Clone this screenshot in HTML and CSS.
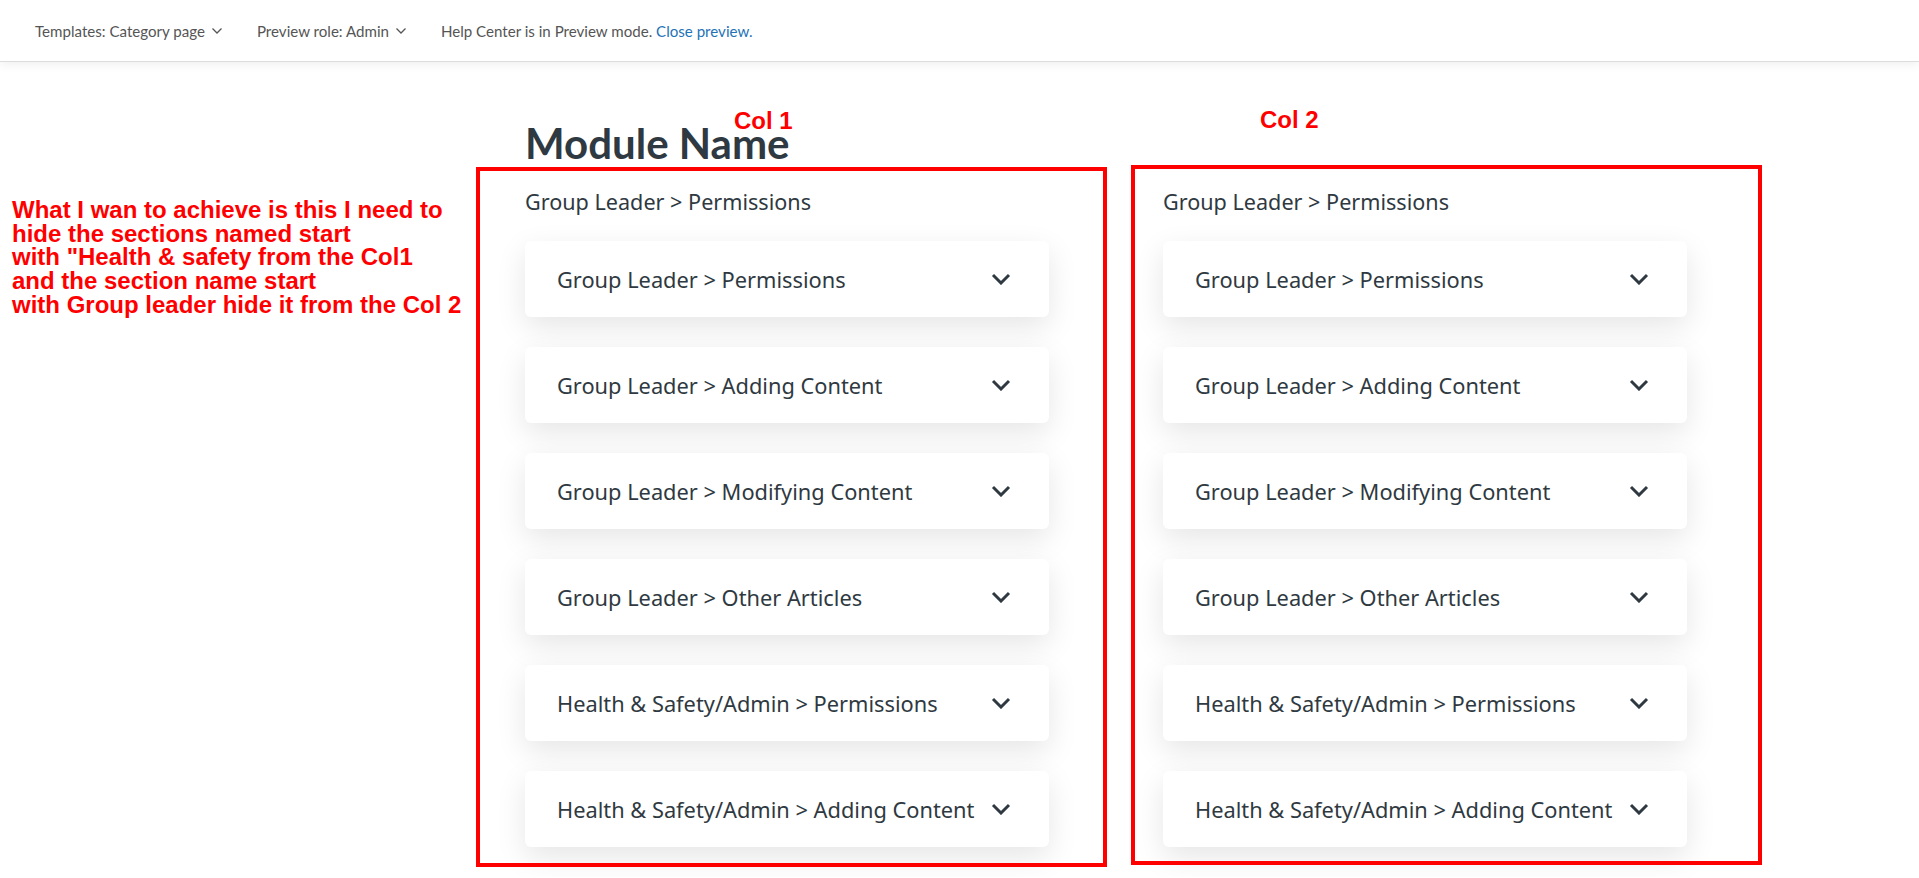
FILE: index.html
```html
<!DOCTYPE html>
<html>
<head>
    <title>Module Name</title>
    <link rel="stylesheet" href="styles.css">
</head>
<body>
    <header class="preview-bar">
        <span class="preview-item">Templates: Category page <svg class="caret" viewBox="0 0 12 12"><path d="M1.5 3.5l4.5 4.5 4.5-4.5"/></svg></span>
        <span class="preview-item">Preview role: Admin <svg class="caret" viewBox="0 0 12 12"><path d="M1.5 3.5l4.5 4.5 4.5-4.5"/></svg></span>
        <span class="preview-item">Help Center is in Preview mode.&nbsp;<a href="#">Close preview.</a></span>
    </header>

    <div class="page">
        <p class="note">What I wan to achieve is this I need to<br>
            hide the sections named start<br>
            with "Health &amp; safety from the Col1<br>
            and the section name start<br>
            with Group leader hide it from the Col 2</p>

        <main class="module">
            <h1>Module Name</h1>

            <div class="columns">
                <section class="col col-1">
                    <span class="col-label">Col 1</span>
                    <div class="col-mark"></div>
                    <h2 class="col-title">Group Leader &gt; Permissions</h2>
                    <div class="section-card"><span>Group Leader &gt; Permissions</span><svg class="chev" viewBox="0 0 20 12"><path d="M2 2l8 8 8-8"/></svg></div>
                    <div class="section-card"><span>Group Leader &gt; Adding Content</span><svg class="chev" viewBox="0 0 20 12"><path d="M2 2l8 8 8-8"/></svg></div>
                    <div class="section-card"><span>Group Leader &gt; Modifying Content</span><svg class="chev" viewBox="0 0 20 12"><path d="M2 2l8 8 8-8"/></svg></div>
                    <div class="section-card"><span>Group Leader &gt; Other Articles</span><svg class="chev" viewBox="0 0 20 12"><path d="M2 2l8 8 8-8"/></svg></div>
                    <div class="section-card"><span>Health &amp; Safety/Admin &gt; Permissions</span><svg class="chev" viewBox="0 0 20 12"><path d="M2 2l8 8 8-8"/></svg></div>
                    <div class="section-card"><span>Health &amp; Safety/Admin &gt; Adding Content</span><svg class="chev" viewBox="0 0 20 12"><path d="M2 2l8 8 8-8"/></svg></div>
                </section>

                <section class="col col-2">
                    <span class="col-label">Col 2</span>
                    <div class="col-mark"></div>
                    <h2 class="col-title">Group Leader &gt; Permissions</h2>
                    <div class="section-card"><span>Group Leader &gt; Permissions</span><svg class="chev" viewBox="0 0 20 12"><path d="M2 2l8 8 8-8"/></svg></div>
                    <div class="section-card"><span>Group Leader &gt; Adding Content</span><svg class="chev" viewBox="0 0 20 12"><path d="M2 2l8 8 8-8"/></svg></div>
                    <div class="section-card"><span>Group Leader &gt; Modifying Content</span><svg class="chev" viewBox="0 0 20 12"><path d="M2 2l8 8 8-8"/></svg></div>
                    <div class="section-card"><span>Group Leader &gt; Other Articles</span><svg class="chev" viewBox="0 0 20 12"><path d="M2 2l8 8 8-8"/></svg></div>
                    <div class="section-card"><span>Health &amp; Safety/Admin &gt; Permissions</span><svg class="chev" viewBox="0 0 20 12"><path d="M2 2l8 8 8-8"/></svg></div>
                    <div class="section-card"><span>Health &amp; Safety/Admin &gt; Adding Content</span><svg class="chev" viewBox="0 0 20 12"><path d="M2 2l8 8 8-8"/></svg></div>
                </section>
            </div>
        </main>
    </div>
</body>
</html>
```

FILE: styles.css
```css
:root {
    --text: #2f3941;
    --muted: #555;
    --link: #1f73b7;
    --mark: #ff0000;
}

* {
    box-sizing: border-box;
}

body {
    margin: 0;
    background: #fff;
    color: var(--text);
    font-family: "Noto Sans", Lato, sans-serif;
    overflow: hidden;
}

/* preview bar */
.preview-bar {
    height: 62px;
    display: flex;
    align-items: center;
    gap: 34px;
    padding-left: 35px;
    background: #fff;
    border-bottom: 1px solid #ddd;
    box-shadow: 0 2px 10px rgba(0, 0, 0, 0.07);
    font-family: Lato, "Noto Sans", sans-serif;
    font-size: 15.1px;
    color: var(--muted);
    position: relative;
    z-index: 2;
}

.preview-item {
    display: flex;
    align-items: center;
    white-space: nowrap;
}

.preview-item a {
    color: var(--link);
    text-decoration: none;
}

.caret {
    width: 12px;
    height: 12px;
    margin-left: 6px;
    fill: none;
    stroke: var(--muted);
    stroke-width: 1.3;
}

/* page */
.page {
    display: flex;
    padding-left: 12px;
}

.note {
    width: 513px;
    margin: 0;
    padding-top: 136px;
    color: var(--mark);
    font-family: "Liberation Sans", Arial, sans-serif;
    font-weight: bold;
    font-size: 24px;
    line-height: 23.7px;
}

.module {
    width: 1162px;
}

h1 {
    margin: 56px 0 0;
    font-family: Lato, "Noto Sans", sans-serif;
    font-size: 42px;
    line-height: 50px;
    font-weight: 700;
}

.columns {
    display: grid;
    grid-template-columns: 524px 524px;
    column-gap: 114px;
    margin-top: 20px;
}

.col {
    position: relative;
}

.col-title {
    margin: 0 0 25px;
    font-size: 21.6px;
    line-height: 28px;
    font-weight: 400;
}

.section-card {
    height: 76px;
    display: flex;
    align-items: center;
    justify-content: space-between;
    padding: 0 38px 0 32px;
    margin-bottom: 30px;
    background: #fff;
    border-radius: 6px;
    box-shadow: 0 10px 30px rgba(0, 0, 0, 0.1);
    font-size: 21.8px;
    white-space: nowrap;
}

.chev {
    width: 20px;
    height: 12px;
    flex: none;
    fill: none;
    stroke: var(--text);
    stroke-width: 3;
}

/* annotation overlays */
.col-mark {
    position: absolute;
    border: 4px solid var(--mark);
    pointer-events: none;
}

.col-1 .col-mark {
    left: -49px;
    right: -58px;
    top: -21px;
    bottom: 10px;
}

.col-2 .col-mark {
    left: -32px;
    right: -75px;
    top: -23px;
    bottom: 12px;
}

.col-label {
    position: absolute;
    color: var(--mark);
    font-family: "Liberation Sans", Arial, sans-serif;
    font-weight: bold;
    font-size: 24px;
    line-height: 26px;
}

.col-1 .col-label {
    left: 209px;
    top: -80px;
}

.col-2 .col-label {
    left: 97px;
    top: -81px;
}
```
